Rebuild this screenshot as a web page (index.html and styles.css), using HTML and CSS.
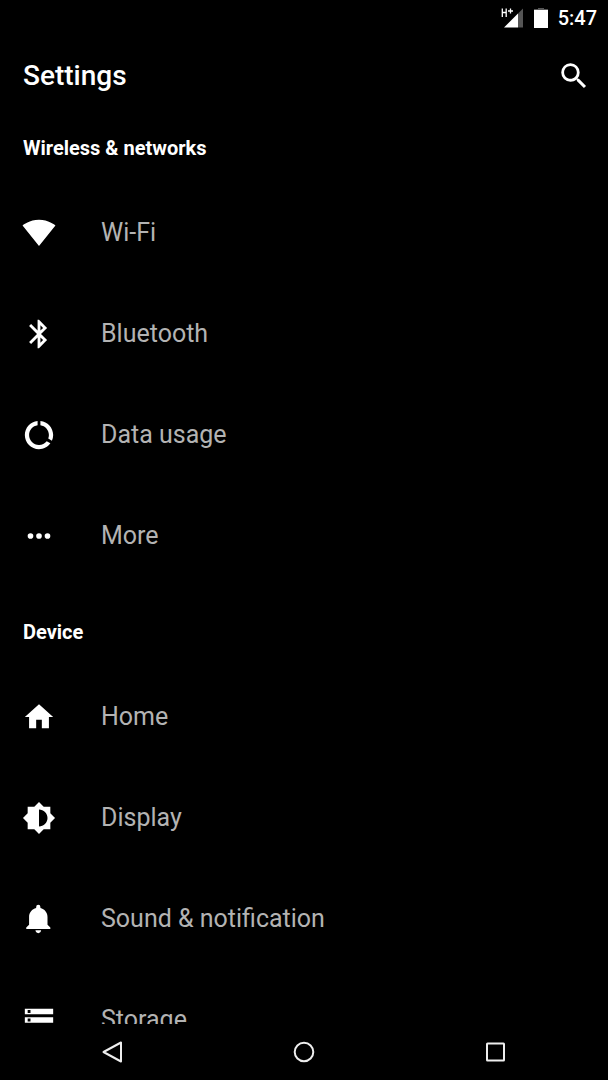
FILE: index.html
```html
<!DOCTYPE html>
<html lang="en">
<head>
<meta charset="utf-8">
<meta name="viewport" content="width=device-width, initial-scale=1">
<title>Settings</title>
<link rel="stylesheet" href="styles.css">
</head>
<body>
<div class="screen">
  <div class="status-bar">
    <svg class="signal" viewBox="0 0 24 22" aria-label="Mobile signal" role="img">
      <path class="dim" d="M23 1.500V20.500H18V6.500z"/>
      <path d="M18 6.500V20.500H4z"/>
      <path class="badge" d="M2.300 1.500v8.500M6.200 1.500v8.500M2 5.500h4.500M10.500 1.500v5M8 4h5"/>
    </svg>
    <svg class="battery" viewBox="0 0 14 20" aria-label="Battery" role="img">
      <path class="dim" d="M4 0h6v1h4v1H0V1h4z"/>
      <path d="M0 2h14V20H0z"/>
    </svg>
    <time class="clock">5:47</time>
  </div>

  <header class="app-bar">
    <h1 class="title">Settings</h1>
    <button class="search" type="button" aria-label="Search">
      <svg class="icon" viewBox="0 0 24 24"><path d="M15.500 14h-.79l-.28-.27A6.470 6.470 0 0 0 16 9.500 6.500 6.500 0 1 0 9.500 16c1.610 0 3.090-.59 4.230-1.570l.27.28v.79l5 4.990L20.490 19zm-6 0C7.010 14 5 11.990 5 9.500S7.010 5 9.500 5 14 7.010 14 9.500 11.990 14 9.500 14z"/></svg>
    </button>
  </header>

  <main class="content">
    <section class="group">
      <h2 class="category">Wireless &amp; networks</h2>
      <a class="row" href="#wifi">
        <svg class="icon" viewBox="0 0 24 24"><path d="M12 21.100L23.600 6.700C23.150 6.350 18.700 2.700 12 2.700S.85 6.350.4 6.700z"/></svg>
        <span>Wi-Fi</span>
      </a>
      <a class="row" href="#bluetooth">
        <svg class="icon" viewBox="0 0 24 24"><path d="M17.710 7.710L12 2h-1v7.590L6.410 5 5 6.410 10.590 12 5 17.590 6.410 19 11 14.410V22h1l5.710-5.710-4.300-4.290zM13 5.830l1.880 1.880L13 9.590zm1.880 10.460L13 18.170v-3.760z"/></svg>
        <span>Bluetooth</span>
      </a>
      <a class="row" href="#data-usage">
        <svg class="icon" viewBox="0 0 24 24"><path d="M13 2.050v3.030c3.390.49 6 3.390 6 6.920 0 .9-.18 1.750-.48 2.540l2.600 1.530c.56-1.240.88-2.620.88-4.070 0-5.180-3.950-9.450-9-9.950zM12 19c-3.870 0-7-3.130-7-7 0-3.530 2.610-6.430 6-6.920V2.050c-5.060.5-9 4.760-9 9.950 0 5.520 4.470 10 9.990 10 3.310 0 6.240-1.610 8.060-4.090l-2.600-1.530A6.950 6.950 0 0 1 12 19z"/></svg>
        <span>Data usage</span>
      </a>
      <a class="row" href="#more">
        <svg class="icon" viewBox="0 0 24 24"><circle cx="6" cy="12" r="2"/><circle cx="12" cy="12" r="2"/><circle cx="18" cy="12" r="2"/></svg>
        <span>More</span>
      </a>
    </section>

    <section class="group">
      <h2 class="category">Device</h2>
      <a class="row" href="#home">
        <svg class="icon" viewBox="0 0 24 24"><path d="M10 20v-6h4v6h5v-8h3L12 3 2 12h3v8z"/></svg>
        <span>Home</span>
      </a>
      <a class="row" href="#display">
        <svg class="icon" viewBox="0 0 24 24"><path d="M20 15.310L23.310 12 20 8.690V4h-4.690L12 .69 8.690 4H4v4.690L.69 12 4 15.310V20h4.690L12 23.310 15.310 20H20zM12 18V6c3.310 0 6 2.690 6 6s-2.690 6-6 6z"/></svg>
        <span>Display</span>
      </a>
      <a class="row" href="#sound">
        <svg class="icon" viewBox="0 0 24 24"><path d="M11.500 22c1.100 0 2-.9 2-2h-4c0 1.100.9 2 2 2zm6.500-6v-5.500c0-3.070-2.130-5.640-5-6.320V3.500a1.500 1.500 0 0 0-3 0v.68c-2.870.68-5 3.250-5 6.320V16l-2 2v1h17v-1z"/></svg>
        <span>Sound &amp; notification</span>
      </a>
      <a class="row" href="#storage">
        <svg class="icon" viewBox="0 0 24 24"><path d="M2 20h20v-4H2zm2-3h2v2H4zM2 4v4h20V4zm4 3H4V5h2zm-4 7h20v-4H2zm2-3h2v2H4z"/></svg>
        <span>Storage</span>
      </a>
    </section>
  </main>

  <nav class="nav-bar">
    <button class="nav-button" type="button" aria-label="Back">
      <svg class="nav-icon" viewBox="0 0 24 24"><path d="M21 2.500v19L3.500 12z"/></svg>
    </button>
    <button class="nav-button" type="button" aria-label="Home">
      <svg class="nav-icon" viewBox="0 0 24 24"><circle cx="12" cy="12" r="9.300"/></svg>
    </button>
    <button class="nav-button" type="button" aria-label="Recent apps">
      <svg class="nav-icon" viewBox="0 0 24 24"><rect x="3" y="3.500" width="17" height="17" rx=".5"/></svg>
    </button>
  </nav>
</div>
</body>
</html>
```
FILE: styles.css
```css
* {
  box-sizing: border-box;
}

body {
  margin: 0;
  background: #000;
  color: #fff;
  font-family: Roboto, "Liberation Sans", sans-serif;
}

svg {
  display: block;
  fill: #fff;
}

button {
  padding: 0;
  border: 0;
  background: none;
  color: inherit;
  cursor: pointer;
}

.screen {
  display: flex;
  flex-direction: column;
  height: 100vh;
}

.status-bar {
  display: flex;
  flex: none;
  align-items: center;
  justify-content: flex-end;
  gap: 10px;
  height: 36px;
  padding: 0 11px;
}

.signal {
  width: 24px;
  height: 22px;
}

.signal .badge {
  fill: none;
  stroke: #fff;
  stroke-width: 1.3;
}

.battery {
  width: 14px;
  height: 20px;
}

.dim {
  fill: #555;
}

.clock {
  font-size: 20px;
  font-weight: 500;
  line-height: 24px;
}

.app-bar {
  display: flex;
  flex: none;
  align-items: center;
  justify-content: space-between;
  height: 79px;
  padding: 0 17px 0 23px;
}

.title {
  margin: 0;
  font-size: 28px;
  font-weight: 500;
  line-height: 36px;
}

.icon {
  flex: none;
  width: 34px;
  height: 34px;
}

.content {
  flex: 1;
  min-height: 0;
  overflow: hidden;
}

.group + .group {
  padding-top: 13px;
}

.category {
  margin: 0;
  padding: 0 23px;
  font-size: 20px;
  font-weight: 700;
  line-height: 67px;
}

.row {
  display: flex;
  align-items: center;
  gap: 45px;
  height: 101px;
  padding: 0 22px;
  color: #b3b3b3;
  font-size: 25px;
  line-height: 32px;
  text-decoration: none;
}

.nav-bar {
  display: flex;
  flex: none;
  height: 56px;
  padding: 0 16px;
}

.nav-button {
  display: flex;
  flex: 1;
  align-items: center;
  justify-content: center;
}

.nav-icon {
  width: 24px;
  height: 24px;
  fill: none;
  stroke: #eee;
  stroke-width: 2;
  stroke-linejoin: round;
}
```
